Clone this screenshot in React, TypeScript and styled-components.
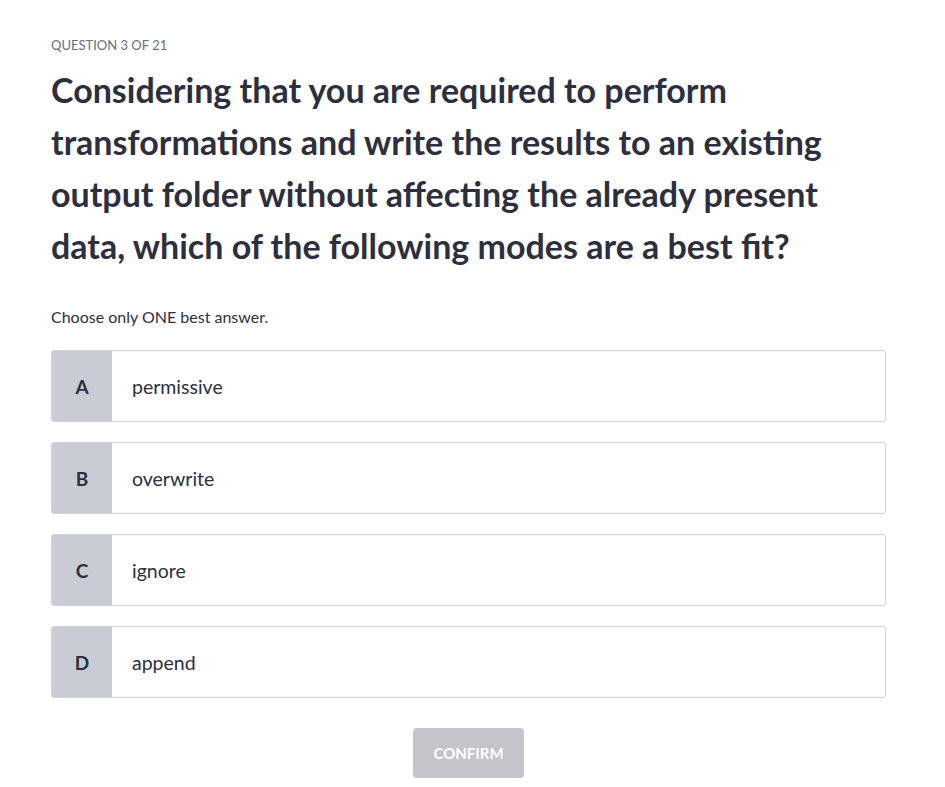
import React from "react";
import styled, { createGlobalStyle } from "styled-components";

const Global = createGlobalStyle`
  html, body { margin: 0; padding: 0; background: #ffffff; }
  body { font-family: Lato, "Noto Sans", sans-serif; color: #2d2f3f; }
`;

const Page = styled.main`
  width: 835px;
  padding: 37px 0 0 51px;
  display: flex;
  flex-direction: column;
`;

const Counter = styled.div`
  font-size: 13px;
  line-height: 16px;
  color: #6b6e7a;
  text-transform: uppercase;
`;

const Title = styled.h1`
  margin: 11px 0 0;
  font-size: 34px;
  line-height: 52px;
  font-weight: 700;
  color: #2d2f3f;
`;

const Hint = styled.p`
  margin: 35px 0 0;
  font-size: 16px;
  line-height: 20px;
  color: #2d2f3f;
`;

const Options = styled.div`
  margin-top: 23px;
  display: flex;
  flex-direction: column;
  gap: 20px;
`;

const Option = styled.button`
  display: flex;
  align-items: stretch;
  height: 72px;
  padding: 0;
  border: 1px solid #d1d3da;
  border-radius: 3px;
  background: #ffffff;
  overflow: hidden;
  cursor: pointer;
  font-family: inherit;
  text-align: left;
`;

const Letter = styled.span`
  width: 60px;
  flex: none;
  display: flex;
  align-items: center;
  justify-content: center;
  background: #c9ccd5;
  font-size: 19px;
  font-weight: 700;
  color: #2d2f3f;
`;

const Answer = styled.span`
  display: flex;
  align-items: center;
  padding-left: 20px;
  font-size: 19.5px;
  color: #2d2f3f;
`;

const Footer = styled.div`
  margin-top: 30px;
  display: flex;
  justify-content: center;
`;

const Confirm = styled.button`
  width: 111px;
  height: 50px;
  border: none;
  border-radius: 4px;
  background: #c4c5cb;
  color: #ffffff;
  font-family: inherit;
  font-size: 15px;
  font-weight: 700;
  text-transform: uppercase;
`;

const options = [
  { key: "A", text: "permissive" },
  { key: "B", text: "overwrite" },
  { key: "C", text: "ignore" },
  { key: "D", text: "append" },
];

export default function App() {
  return (
    <>
      <Global />
      <Page>
        <Counter>Question 3 of 21</Counter>
        <Title>
          Considering that you are required to perform transformations and
          write the results to an existing output folder without affecting the
          already present data, which of the following modes are a best fit?
        </Title>
        <Hint>Choose only ONE best answer.</Hint>
        <Options>
          {options.map((o) => (
            <Option key={o.key}>
              <Letter>{o.key}</Letter>
              <Answer>{o.text}</Answer>
            </Option>
          ))}
        </Options>
        <Footer>
          <Confirm disabled>Confirm</Confirm>
        </Footer>
      </Page>
    </>
  );
}
